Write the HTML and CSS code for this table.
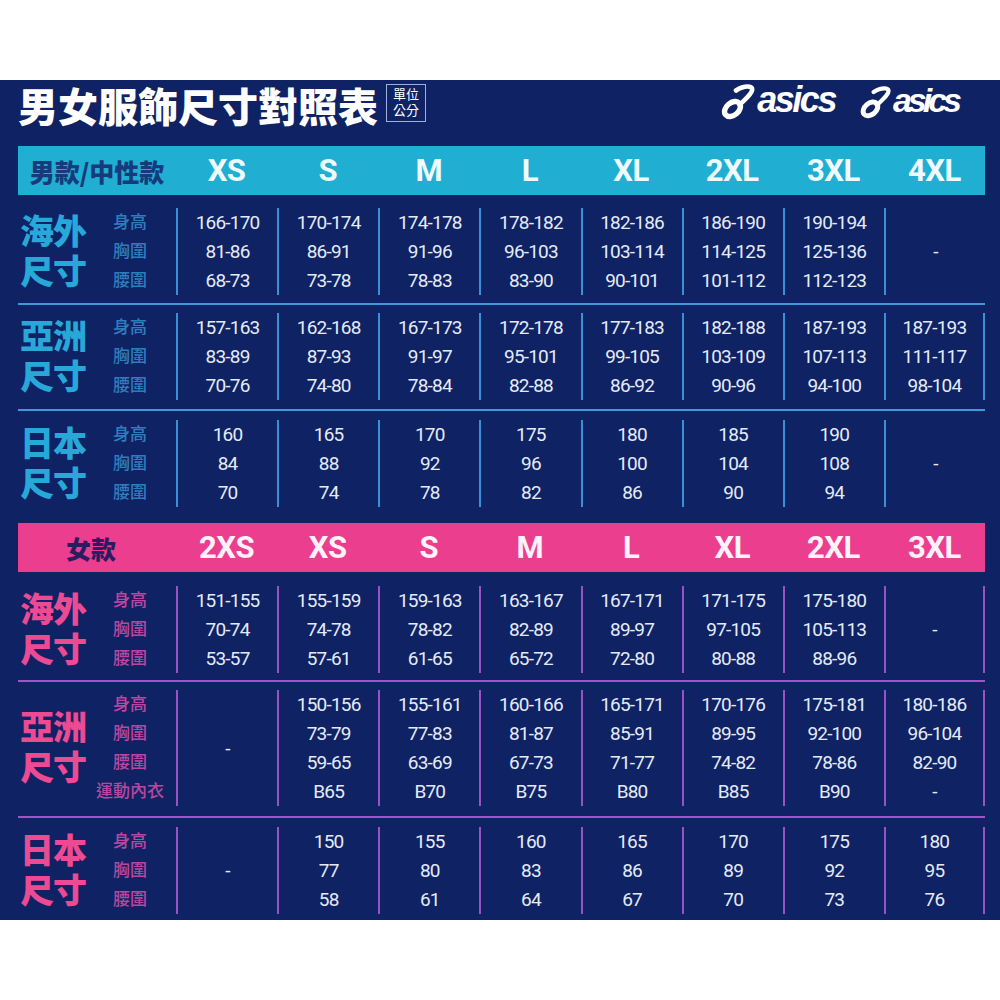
FILE: index.html
```html
<!DOCTYPE html>
<html lang="zh-Hant">
<head>
<meta charset="utf-8">
<title>男女服飾尺寸對照表</title>
<link rel="stylesheet" href="styles.css">
</head>
<body>
<div class="chart">
  <div class="top">
    <h1 class="title">男女服飾尺寸對照表</h1>
    <div class="unit"><span>單位</span><span>公分</span></div>
    <div class="logos">
      <div class="logo">
        <svg class="swoosh" viewBox="0 0 36 36" width="36" height="36">
          <ellipse cx="12.5" cy="25" rx="9" ry="6.2" transform="rotate(-40 12.5 25)" fill="none" stroke="#fff" stroke-width="5.4"/>
          <path d="M19.5 21 C 24 16, 31 11, 32 6.5 C 33 2.5, 28 1.5, 22 3.5 C 19.5 4.3, 17.5 5.5, 16 6.5" fill="none" stroke="#fff" stroke-width="4.6" stroke-linecap="round"/>
        </svg>
        <span class="brand">asics</span>
      </div>
      <div class="logo logo-b">
        <svg class="swoosh" viewBox="0 0 36 36" width="33" height="33">
          <ellipse cx="12.5" cy="25" rx="9" ry="6.2" transform="rotate(-40 12.5 25)" fill="none" stroke="#fff" stroke-width="5.4"/>
          <path d="M19.5 21 C 24 16, 31 11, 32 6.5 C 33 2.5, 28 1.5, 22 3.5 C 19.5 4.3, 17.5 5.5, 16 6.5" fill="none" stroke="#fff" stroke-width="4.6" stroke-linecap="round"/>
        </svg>
        <span class="brand brand-b">asics</span>
      </div>
    </div>
  </div>

  <!-- MEN -->
  <div class="bar men">
    <div class="bar-label">男款/中性款</div>
    <div>XS</div><div>S</div><div>M</div><div>L</div><div>XL</div><div>2XL</div><div>3XL</div><div>4XL</div>
  </div>

  <div class="sec men m1">
    <div class="lab"><div class="big"><span>海外</span><span>尺寸</span></div><div class="small"><span>身高</span><span>胸圍</span><span>腰圍</span></div></div>
    <div class="c"><span>166-170</span><span>81-86</span><span>68-73</span></div>
    <div class="c"><span>170-174</span><span>86-91</span><span>73-78</span></div>
    <div class="c"><span>174-178</span><span>91-96</span><span>78-83</span></div>
    <div class="c"><span>178-182</span><span>96-103</span><span>83-90</span></div>
    <div class="c"><span>182-186</span><span>103-114</span><span>90-101</span></div>
    <div class="c"><span>186-190</span><span>114-125</span><span>101-112</span></div>
    <div class="c"><span>190-194</span><span>125-136</span><span>112-123</span></div>
    <div class="c"><span>-</span></div>
  </div>
  <div class="hr men-hr"></div>
  <div class="sec men m2 closed">
    <div class="lab"><div class="big"><span>亞洲</span><span>尺寸</span></div><div class="small"><span>身高</span><span>胸圍</span><span>腰圍</span></div></div>
    <div class="c"><span>157-163</span><span>83-89</span><span>70-76</span></div>
    <div class="c"><span>162-168</span><span>87-93</span><span>74-80</span></div>
    <div class="c"><span>167-173</span><span>91-97</span><span>78-84</span></div>
    <div class="c"><span>172-178</span><span>95-101</span><span>82-88</span></div>
    <div class="c"><span>177-183</span><span>99-105</span><span>86-92</span></div>
    <div class="c"><span>182-188</span><span>103-109</span><span>90-96</span></div>
    <div class="c"><span>187-193</span><span>107-113</span><span>94-100</span></div>
    <div class="c"><span>187-193</span><span>111-117</span><span>98-104</span></div>
  </div>
  <div class="hr men-hr"></div>
  <div class="sec men m3">
    <div class="lab"><div class="big"><span>日本</span><span>尺寸</span></div><div class="small"><span>身高</span><span>胸圍</span><span>腰圍</span></div></div>
    <div class="c"><span>160</span><span>84</span><span>70</span></div>
    <div class="c"><span>165</span><span>88</span><span>74</span></div>
    <div class="c"><span>170</span><span>92</span><span>78</span></div>
    <div class="c"><span>175</span><span>96</span><span>82</span></div>
    <div class="c"><span>180</span><span>100</span><span>86</span></div>
    <div class="c"><span>185</span><span>104</span><span>90</span></div>
    <div class="c"><span>190</span><span>108</span><span>94</span></div>
    <div class="c"><span>-</span></div>
  </div>

  <!-- WOMEN -->
  <div class="bar women">
    <div class="bar-label">女款</div>
    <div>2XS</div><div>XS</div><div>S</div><div>M</div><div>L</div><div>XL</div><div>2XL</div><div>3XL</div>
  </div>

  <div class="sec women w1 closed">
    <div class="lab"><div class="big"><span>海外</span><span>尺寸</span></div><div class="small"><span>身高</span><span>胸圍</span><span>腰圍</span></div></div>
    <div class="c"><span>151-155</span><span>70-74</span><span>53-57</span></div>
    <div class="c"><span>155-159</span><span>74-78</span><span>57-61</span></div>
    <div class="c"><span>159-163</span><span>78-82</span><span>61-65</span></div>
    <div class="c"><span>163-167</span><span>82-89</span><span>65-72</span></div>
    <div class="c"><span>167-171</span><span>89-97</span><span>72-80</span></div>
    <div class="c"><span>171-175</span><span>97-105</span><span>80-88</span></div>
    <div class="c"><span>175-180</span><span>105-113</span><span>88-96</span></div>
    <div class="c"><span>-</span></div>
  </div>
  <div class="hr women-hr"></div>
  <div class="sec women w2 closed">
    <div class="lab"><div class="big"><span>亞洲</span><span>尺寸</span></div><div class="small"><span>身高</span><span>胸圍</span><span>腰圍</span><span>運動內衣</span></div></div>
    <div class="c"><span>-</span></div>
    <div class="c"><span>150-156</span><span>73-79</span><span>59-65</span><span>B65</span></div>
    <div class="c"><span>155-161</span><span>77-83</span><span>63-69</span><span>B70</span></div>
    <div class="c"><span>160-166</span><span>81-87</span><span>67-73</span><span>B75</span></div>
    <div class="c"><span>165-171</span><span>85-91</span><span>71-77</span><span>B80</span></div>
    <div class="c"><span>170-176</span><span>89-95</span><span>74-82</span><span>B85</span></div>
    <div class="c"><span>175-181</span><span>92-100</span><span>78-86</span><span>B90</span></div>
    <div class="c"><span>180-186</span><span>96-104</span><span>82-90</span><span>-</span></div>
  </div>
  <div class="hr women-hr"></div>
  <div class="sec women w3 closed">
    <div class="lab"><div class="big"><span>日本</span><span>尺寸</span></div><div class="small"><span>身高</span><span>胸圍</span><span>腰圍</span></div></div>
    <div class="c"><span>-</span></div>
    <div class="c"><span>150</span><span>77</span><span>58</span></div>
    <div class="c"><span>155</span><span>80</span><span>61</span></div>
    <div class="c"><span>160</span><span>83</span><span>64</span></div>
    <div class="c"><span>165</span><span>86</span><span>67</span></div>
    <div class="c"><span>170</span><span>89</span><span>70</span></div>
    <div class="c"><span>175</span><span>92</span><span>73</span></div>
    <div class="c"><span>180</span><span>95</span><span>76</span></div>
  </div>
</div>
</body>
</html>
```
FILE: styles.css
```css
html, body {
  margin: 0;
  padding: 0;
  background: #ffffff;
}

body {
  font-family: "Noto Sans CJK TC", "Noto Sans", sans-serif;
}

.chart {
  margin-top: 80px;
  height: 840px;
  background: #0f2264;
  padding: 0 15px 0 18px;
  box-sizing: border-box;
}

/* ---------- top row ---------- */
.top {
  display: flex;
  align-items: flex-start;
  height: 66px;
}

.title {
  margin: 0;
  font-family: "Noto Sans CJK TC", sans-serif;
  font-weight: 900;
  font-size: 40px;
  line-height: 50px;
  color: #ffffff;
}

.unit {
  margin: 4px 0 0 8px;
  width: 40px;
  height: 38px;
  box-sizing: border-box;
  border: 1.5px solid #9fb0dd;
  display: flex;
  flex-direction: column;
  align-items: center;
  justify-content: center;
  color: #ffffff;
  font-family: "Liberation Sans", "Noto Sans CJK TC", sans-serif;
  font-size: 13px;
}

.unit span {
  line-height: 16px;
}

.logos {
  margin-left: auto;
  margin-right: 27px;
  margin-top: 4px;
  display: flex;
  gap: 24px;
}

.logo {
  display: flex;
  align-items: center;
  height: 36px;
}

.swoosh {
  display: block;
}

.brand {
  font-family: "Liberation Sans", Arial, sans-serif;
  font-style: italic;
  font-weight: 700;
  font-size: 36px;
  line-height: 34px;
  letter-spacing: -2.5px;
  color: #ffffff;
  margin-left: 1px;
  padding-bottom: 4px;
}

.brand-b {
  font-size: 34px;
  letter-spacing: -4px;
}

/* ---------- header bars ---------- */
.bar {
  display: grid;
  grid-template-columns: 158px repeat(8, 1fr);
  height: 49px;
  align-items: center;
  font-family: Roboto, "Liberation Sans", sans-serif;
  font-weight: 700;
  font-size: 31px;
  letter-spacing: -0.5px;
  text-align: center;
}

.bar.men {
  background: #20aed2;
  color: #f0fbff;
}

.bar.women {
  background: #ec3e8e;
  color: #fff2f8;
  margin-top: 16px;
}

.bar-label {
  font-family: "Noto Sans CJK TC", sans-serif;
  font-weight: 900;
  font-size: 25px;
  letter-spacing: 0;
}

.bar.men .bar-label {
  color: #163a7c;
}

.bar.women .bar-label {
  color: #2b1c62;
  padding-right: 12px;
}

/* ---------- sections ---------- */
.sec {
  display: grid;
  grid-template-columns: 158px repeat(8, 1fr);
}

.m1 { padding: 13px 0 8px; }
.m2 { padding: 8px 0 9px; }
.m3 { padding: 9px 0 0; }
.w1 { padding: 14px 0 7px; }
.w2 { padding: 8px 0 10px; }
.w3 { padding: 9px 0 0; }

.lab {
  display: flex;
  align-items: center;
  padding-left: 2px;
}

.big {
  width: 70px;
  display: flex;
  flex-direction: column;
  font-family: "Liberation Sans", "Noto Sans CJK TC", sans-serif;
  font-weight: 900;
  font-size: 34px;
  letter-spacing: -1px;
}

.big span {
  line-height: 40px;
}

.small {
  width: 80px;
  display: flex;
  flex-direction: column;
  align-items: center;
  font-family: "Liberation Sans", "Noto Sans CJK TC", sans-serif;
  font-size: 17px;
  font-weight: 500;
}

.small span {
  line-height: 29px;
}

.men .big { color: #27a8d9; }
.men .small { color: #2f7dbd; }
.women .big { color: #ec4a93; }
.women .small { color: #b9479f; }

.c {
  border-left: 2px solid;
  display: flex;
  flex-direction: column;
  align-items: center;
  justify-content: center;
  min-height: 87px;
  font-family: Roboto, "Liberation Sans", sans-serif;
  font-size: 19px;
  letter-spacing: -0.8px;
  color: #e4ebf7;
}

.c span {
  line-height: 29px;
}

.men .c { border-color: #3a90d2; }
.women .c { border-color: #9a53c6; }

.closed .c:last-child {
  border-right: 2px solid;
}

.men.closed .c:last-child { border-right-color: #3a90d2; }
.women.closed .c:last-child { border-right-color: #9a53c6; }

.hr {
  height: 2px;
}

.men-hr { background: #3d9bd8; }
.women-hr { background: #a452c7; }
```
